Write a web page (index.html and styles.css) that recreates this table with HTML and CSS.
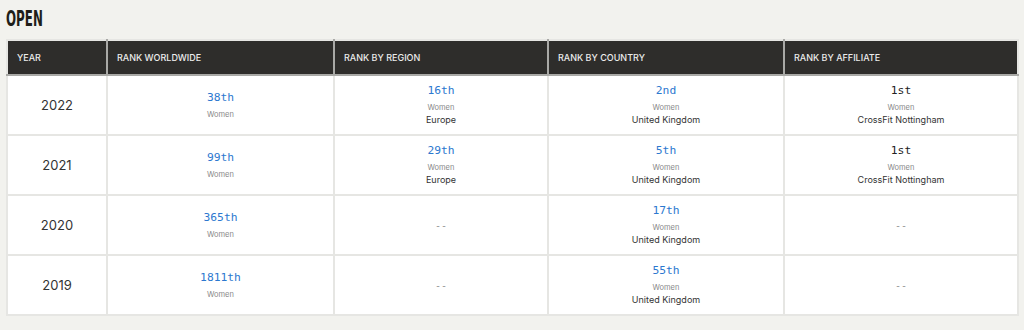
FILE: index.html
```html
<!DOCTYPE html>
<html>
<head>
<meta charset="utf-8">
<link rel="stylesheet" href="styles.css">
</head>
<body>
<section class="wrap">
  <h2 class="title">OPEN</h2>
  <table class="ranks">
    <colgroup>
      <col class="c-year"><col class="c-world"><col class="c-region"><col class="c-country"><col class="c-aff">
    </colgroup>
    <thead>
      <tr><th>YEAR</th><th>RANK WORLDWIDE</th><th>RANK BY REGION</th><th>RANK BY COUNTRY</th><th>RANK BY AFFILIATE</th></tr>
    </thead>
    <tbody>
      <tr>
        <td class="year">2022</td>
        <td><div class="rank">38th</div><div class="div">Women</div></td>
        <td><div class="rank">16th</div><div class="div">Women</div><div class="place">Europe</div></td>
        <td><div class="rank">2nd</div><div class="div">Women</div><div class="place">United Kingdom</div></td>
        <td><div class="rank dark">1st</div><div class="div">Women</div><div class="place">CrossFit Nottingham</div></td>
      </tr>
      <tr>
        <td class="year">2021</td>
        <td><div class="rank">99th</div><div class="div">Women</div></td>
        <td><div class="rank">29th</div><div class="div">Women</div><div class="place">Europe</div></td>
        <td><div class="rank">5th</div><div class="div">Women</div><div class="place">United Kingdom</div></td>
        <td><div class="rank dark">1st</div><div class="div">Women</div><div class="place">CrossFit Nottingham</div></td>
      </tr>
      <tr>
        <td class="year">2020</td>
        <td><div class="rank">365th</div><div class="div">Women</div></td>
        <td><div class="none">--</div></td>
        <td><div class="rank">17th</div><div class="div">Women</div><div class="place">United Kingdom</div></td>
        <td><div class="none">--</div></td>
      </tr>
      <tr>
        <td class="year">2019</td>
        <td><div class="rank">1811th</div><div class="div">Women</div></td>
        <td><div class="none">--</div></td>
        <td><div class="rank">55th</div><div class="div">Women</div><div class="place">United Kingdom</div></td>
        <td><div class="none">--</div></td>
      </tr>
    </tbody>
  </table>
</section>
</body>
</html>
```

FILE: styles.css
```css
html, body {
  margin: 0;
  padding: 0;
  background: #f2f2ee;
}
.wrap {
  padding: 8px 6px 0 6px;
  font-family: Inter, "Noto Sans", sans-serif;
}
.title {
  margin: 0 0 9px 0;
  font-family: "DejaVu Sans Condensed", "DejaVu Sans", sans-serif;
  font-stretch: condensed;
  font-weight: bold;
  font-size: 22px;
  line-height: 22px;
  color: #1f1e1a;
  transform: scaleX(0.6);
  transform-origin: left center;
}
.ranks {
  border-collapse: collapse;
  table-layout: fixed;
  width: 1011px;
  background: #fff;
  border: 2px solid #e6e6e3;
}
.c-year { width: 100px; }
.c-world { width: 227px; }
.c-region { width: 214px; }
.c-country { width: 236px; }
.c-aff { width: 234px; }
.ranks th {
  background: #2e2d2b;
  color: #ececec;
  font-size: 9px;
  font-weight: 500;
  text-align: left;
  padding: 0 9px;
  height: 33px;
  border: 2px solid #a9a9a6;
  border-top-color: #e6e6e3;
}
.ranks th:first-child { border-left-color: #e6e6e3; }
.ranks th:last-child { border-right-color: #e6e6e3; }
.ranks td {
  height: 58px;
  padding: 0;
  text-align: center;
  vertical-align: middle;
  border: 2px solid #e6e6e3;
}
.year {
  font-size: 13px;
  color: #333;
}
.rank {
  font-family: "DejaVu Sans Mono", "Liberation Mono", monospace;
  font-size: 11.3px;
  line-height: 14px;
  color: #2c78cf;
}
.rank.dark { color: #222; }
.div {
  margin-top: 5px;
  font-size: 7.5px;
  line-height: 10px;
  color: #888;
}
.place {
  margin-top: 1px;
  font-size: 9px;
  line-height: 12px;
  color: #333;
}
.none {
  font-family: "DejaVu Sans Mono", monospace;
  font-size: 10px;
  color: #999;
}
```
